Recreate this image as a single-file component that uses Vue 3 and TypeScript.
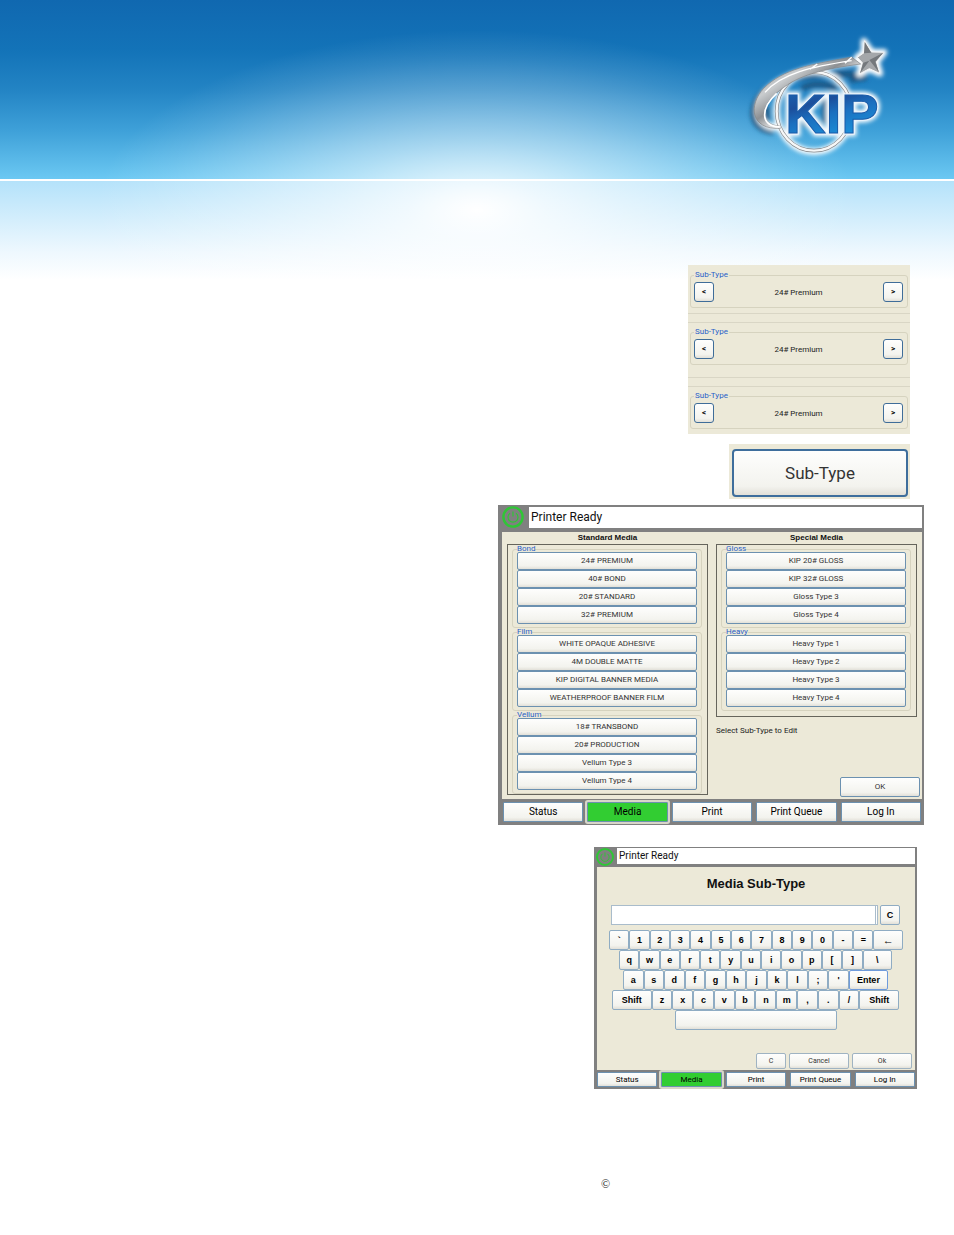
<script setup lang="ts">
import { ref } from 'vue'

interface MediaGroup {
  name: string
  items: string[]
}

interface Key {
  label: string
  size: number
}

const subTypes = ['24# Premium', '24# Premium', '24# Premium']

const standardMedia: MediaGroup[] = [
  { name: 'Bond', items: ['24# PREMIUM', '40# BOND', '20# STANDARD', '32# PREMIUM'] },
  {
    name: 'Film',
    items: ['WHITE OPAQUE ADHESIVE', '4M DOUBLE MATTE', 'KIP DIGITAL BANNER MEDIA', 'WEATHERPROOF BANNER FILM'],
  },
  { name: 'Vellum', items: ['18# TRANSBOND', '20# PRODUCTION', 'Vellum Type 3', 'Vellum Type 4'] },
]

const specialMedia: MediaGroup[] = [
  { name: 'Gloss', items: ['KIP 20# GLOSS', 'KIP 32# GLOSS', 'Gloss Type 3', 'Gloss Type 4'] },
  { name: 'Heavy', items: ['Heavy Type 1', 'Heavy Type 2', 'Heavy Type 3', 'Heavy Type 4'] },
]

const tabs = ['Status', 'Media', 'Print', 'Print Queue', 'Log In']
const activeTab = ref('Media')
const entry = ref('')

const singles = (chars: string): Key[] => chars.split('').map((label) => ({ label, size: 2 }))

const rows: Key[][] = [
  [...singles('`1234567890-='), { label: '←', size: 3 }],
  [...singles('qwertyuiop[]'), { label: '\\', size: 3 }],
  [...singles("asdfghjkl;'"), { label: 'Enter', size: 4 }],
  [{ label: 'Shift', size: 4 }, ...singles('zxcvbnm,./'), { label: 'Shift', size: 4 }],
]

function press(label: string) {
  if (label === '←') entry.value = entry.value.slice(0, -1)
  else if (label.length === 1) entry.value += label
}
</script>

<template>
  <div class="page">
    <header class="banner">
      <svg class="logo" viewBox="0 0 540 450" role="img" aria-label="KIP">
        <defs>
          <linearGradient id="chrome" x1="0" y1="0" x2="1" y2="1">
            <stop offset="0" stop-color="#8f9499" />
            <stop offset="0.3" stop-color="#c9ccce" />
            <stop offset="0.45" stop-color="#8d9093" />
            <stop offset="0.6" stop-color="#f4f5f6" />
            <stop offset="1" stop-color="#8b8e91" />
          </linearGradient>
          <linearGradient id="blue" x1="0" y1="0" x2="0.4" y2="1">
            <stop offset="0" stop-color="#1b6dbb" />
            <stop offset="0.4" stop-color="#1c4f9c" />
            <stop offset="0.6" stop-color="#1b6fbf" />
            <stop offset="1" stop-color="#1b94dc" />
          </linearGradient>
          <filter id="soft" x="-20%" y="-20%" width="140%" height="140%">
            <feGaussianBlur stdDeviation="7" />
          </filter>
        </defs>
        <g filter="url(#soft)">
          <g fill="none" stroke="#1d4a70" stroke-opacity="0.75" stroke-width="18">
            <path d="M130 335C55 330 50 250 115 205C160 172 270 155 400 165" />
            <path d="M215 205Q260 180 320 205M360 180l50 -8M225 250v70M285 240v70M110 260v45" />
          </g>
          <g fill="none" stroke="#fff" stroke-width="20" stroke-linejoin="round">
            <ellipse cx="252" cy="274" rx="112" ry="121" />
            <path d="M145 322C75 325 70 255 115 210C165 160 260 135 395 125" />
            <path d="M402 64L424 96L462 97L439 125L449 160L418 146L388 162L397 128L382 112L402 98Z" fill="#fff" />
          </g>
          <text class="mark glow" x="166" y="338">KIP</text>
        </g>
        <ellipse cx="252" cy="274" rx="112" ry="118" fill="none" stroke="#85898d" stroke-width="11" />
        <ellipse cx="252" cy="274" rx="112" ry="118" fill="none" stroke="#f6f7f7" stroke-width="7" />
        <path
          d="M151 325C60 330 55 255 101 205C160 146 240 134 365 111L392 132C280 147 205 165 151 210C85 258 90 315 149 318Z"
          fill="url(#chrome)"
          stroke="#7e8285"
          stroke-width="2"
        />
        <path d="M151 321C86 318 94 262 140 220" fill="none" stroke="#fff" stroke-width="5" />
        <path d="M105 217C155 160 245 140 365 122M240 148L262 132M345 130L365 112" fill="none" stroke="#fff" stroke-width="4" />
        <path
          d="M404 62L424 96L462 97L439 125L449 160L418 146L388 162L397 128L382 112L402 98Z"
          fill="#a4a7aa"
          stroke="#f4f4f4"
          stroke-width="3"
        />
        <path d="M404 66L424 98L402 100ZM460 98L418 120L447 157L436 125ZM390 160L418 122L400 128Z" fill="#74787c" />
        <text class="mark rim" x="166" y="338">KIP</text>
        <text class="mark face" x="166" y="338" fill="url(#blue)">KIP</text>
      </svg>
    </header>

    <main class="panels">
      <section class="selectors" aria-label="Sub-type selectors">
        <div v-for="(value, i) in subTypes" :key="i" class="selector">
          <fieldset class="group">
            <legend>Sub-Type</legend>
            <div class="stepper">
              <button type="button" aria-label="Previous sub-type">&lt;</button>
              <output>{{ value }}</output>
              <button type="button" aria-label="Next sub-type">&gt;</button>
            </div>
          </fieldset>
        </div>
      </section>

      <section class="edit">
        <button type="button">Sub-Type</button>
      </section>

      <section class="screen" aria-label="Media selection">
        <div class="status">
          <svg class="power" viewBox="0 0 24 24" aria-hidden="true">
            <circle cx="12" cy="12" r="9.6" />
            <path class="thin" d="M9 8.2a5 5 0 1 0 6 0M12 6.5v5" />
          </svg>
          <h2>Printer Ready</h2>
        </div>
        <div class="media">
          <div class="column">
            <h3>Standard Media</h3>
            <div class="box">
              <fieldset v-for="group in standardMedia" :key="group.name" class="group">
                <legend>{{ group.name }}</legend>
                <button v-for="item in group.items" :key="item" type="button">{{ item }}</button>
              </fieldset>
            </div>
          </div>
          <div class="column special">
            <h3>Special Media</h3>
            <div class="box">
              <fieldset v-for="group in specialMedia" :key="group.name" class="group">
                <legend>{{ group.name }}</legend>
                <button v-for="item in group.items" :key="item" type="button">{{ item }}</button>
              </fieldset>
            </div>
            <p>Select Sub-Type to Edit</p>
            <button type="button" class="ok">OK</button>
          </div>
        </div>
        <nav class="tabs">
          <button
            v-for="tab in tabs"
            :key="tab"
            type="button"
            :class="{ active: tab === activeTab }"
            @click="activeTab = tab"
          >
            {{ tab }}
          </button>
        </nav>
      </section>

      <section class="screen compact" aria-label="Media sub-type entry">
        <div class="status">
          <svg class="power" viewBox="0 0 24 24" aria-hidden="true">
            <circle cx="12" cy="12" r="9.6" />
            <path class="thin" d="M9 8.2a5 5 0 1 0 6 0M12 6.5v5" />
          </svg>
          <h2>Printer Ready</h2>
        </div>
        <div class="editor">
          <h3 id="entry-title">Media Sub-Type</h3>
          <div class="entry">
            <div class="field">
              <input v-model="entry" type="text" aria-labelledby="entry-title" />
            </div>
            <button type="button" class="key" @click="entry = ''">C</button>
          </div>
          <div class="keyboard">
            <div v-for="(row, r) in rows" :key="r" class="row">
              <button
                v-for="(key, k) in row"
                :key="k"
                type="button"
                class="key"
                :class="{
                  wide: key.size === 3,
                  long: key.size === 4,
                  enter: key.label === 'Enter',
                  back: key.label === '←',
                }"
                @click="press(key.label)"
              >
                {{ key.label }}
              </button>
            </div>
            <div class="row">
              <button type="button" class="key" aria-label="Space" @click="entry += ' '"></button>
            </div>
          </div>
          <div class="actions">
            <button type="button" class="clear" @click="entry = ''">C</button>
            <button type="button">Cancel</button>
            <button type="button">Ok</button>
          </div>
        </div>
        <nav class="tabs">
          <button
            v-for="tab in tabs"
            :key="tab"
            type="button"
            :class="{ active: tab === activeTab }"
            @click="activeTab = tab"
          >
            {{ tab }}
          </button>
        </nav>
      </section>
    </main>

    <footer class="legal">©</footer>
  </div>
</template>

<style>
body {
  margin: 0;
  background: #fff;
}
</style>

<style scoped>
.page,
.page * {
  box-sizing: border-box;
}

.page {
  min-height: 100vh;
  color: #222;
  font-family: Roboto, 'Liberation Sans', Arial, sans-serif;
  background:
    linear-gradient(#fff, #fff) 0 179px / 100% 2px no-repeat,
    radial-gradient(ellipse 40% 180px at 50% 210px, #fff 0, rgba(255, 255, 255, 0.72) 18%, rgba(255, 255, 255, 0.5) 38%, rgba(255, 255, 255, 0.3) 60%, rgba(255, 255, 255, 0.1) 84%, rgba(255, 255, 255, 0) 100%) 0 0 / 100% 280px no-repeat,
    linear-gradient(#1068b0 0, #1373b8 50px, #2384c4 90px, #3ea0d8 130px, #6cc9f3 180px, #b4e2fa 181px, #d4eefc 220px, #eef8fe 252px, #fff 280px) 0 0 / 100% 280px no-repeat,
    #fff;
}

h2,
h3,
p {
  margin: 0;
}

button {
  min-width: 0;
  margin: 0;
  padding: 0;
  overflow: hidden;
  border: 1px solid #6c91b0;
  border-radius: 2px;
  background: linear-gradient(#fefefd, #f3f3ee 80%, #e2e0d8);
  color: #333;
  font-family: Roboto, 'Liberation Sans', Arial, sans-serif;
  font-size: 8px;
  line-height: 12px;
  white-space: nowrap;
}

.banner {
  display: flex;
  justify-content: flex-end;
  height: 265px;
  padding: 20px 44px 0 0;
}

.logo {
  width: 180px;
  height: 150px;
}

.mark {
  font-family: 'Liberation Sans', Arial, sans-serif;
  font-size: 168px;
  font-weight: bold;
}

.glow {
  fill: #fff;
  stroke: #fff;
  stroke-width: 20px;
}

.rim {
  fill: none;
  stroke: #e8f2fa;
  stroke-width: 10px;
}

.face {
  stroke: #1a5ba8;
  stroke-width: 3px;
}

.panels {
  display: flex;
  flex-direction: column;
  align-items: flex-end;
  padding: 0 30px;
}

.group {
  min-width: 0;
  margin: 0;
  border: 1px solid #d6d3bf;
  border-radius: 3px;
}

.group legend {
  padding: 0 1px;
  color: #2a5fc8;
}

/* Stacked sub-type selectors */
.selectors {
  display: flex;
  flex-direction: column;
  gap: 8px;
  width: 222px;
  max-width: 100%;
  margin-right: 14px;
  background: #ece9d8;
}

.selector {
  padding: 3px 2px 5px;
  border: solid #d9d6c5;
  border-width: 1px 0;
}

.selector:first-child {
  border-top-color: transparent;
}

.selector:nth-child(2) {
  padding-bottom: 12px;
}

.selector:last-child {
  border-bottom: 0;
}

.selector .group {
  padding: 1px 4px 5px 3px;
}

.selector legend {
  font-size: 8px;
  line-height: 12px;
}

.stepper {
  display: flex;
  align-items: center;
  justify-content: space-between;
}

.stepper button {
  width: 20px;
  height: 20px;
  border-color: #3f6d99;
  border-radius: 3px;
  color: #000;
  font-weight: bold;
}

.stepper output {
  font-size: 8px;
}

/* Single large button */
.edit {
  width: 181px;
  max-width: 100%;
  margin: 10px 14px 6px 0;
  padding: 5px 2px 2px 3px;
  background: #ece9d8;
}

.edit button {
  display: block;
  width: 100%;
  height: 48px;
  border: 2px solid #3e6e9c;
  border-radius: 4px;
  font-size: 17px;
  line-height: 20px;
}

/* Touch-screen frame */
.screen {
  width: 426px;
  max-width: 100%;
  padding: 2px 2px 0 4px;
  background: #808080;
}

.status {
  display: flex;
  align-items: flex-start;
  height: 25px;
}

.power {
  flex: none;
  width: 24px;
  height: 24px;
  margin: -2px 4px 0 -1px;
  fill: none;
  stroke: #2fc636;
  stroke-width: 2.4;
}

.power .thin {
  stroke-width: 1.2;
}

.status h2 {
  flex: 1;
  padding-left: 2px;
  background: #fff;
  color: #111;
  font-size: 12px;
  font-weight: normal;
  line-height: 21px;
}

.media {
  display: flex;
  gap: 8px;
  padding: 0 2px 2px 5px;
  background: #ece9d8;
}

.column {
  display: flex;
  flex: 1;
  flex-direction: column;
  min-width: 0;
  padding-bottom: 2px;
}

.column h3 {
  color: #111;
  font-family: 'Liberation Sans', Arial, sans-serif;
  font-size: 8px;
  line-height: 12px;
  text-align: center;
}

.box {
  display: flex;
  flex-direction: column;
  gap: 1px;
  padding: 1px 5px 0 4px;
  border: 1px solid #66655c;
}

.box .group {
  display: flex;
  flex-direction: column;
  padding: 0 4px 3px;
}

.box legend {
  padding: 0;
  font-size: 8px;
  line-height: 6px;
}

.box button {
  height: 18px;
}

.special {
  flex-basis: 3px;
  padding-bottom: 0;
}

.special h3,
.special .box {
  margin-right: 3px;
}

.special .box {
  padding-bottom: 5px;
}

.special p {
  padding-top: 8px;
  font-size: 8px;
  line-height: 12px;
}

.ok {
  align-self: flex-end;
  width: 80px;
  height: 20px;
  margin-top: auto;
}

.tabs {
  display: flex;
  gap: 4px;
  padding: 3px 1px 3px 1px;
}

.tabs button {
  flex: 1;
  height: 20px;
  border-radius: 1px;
  color: #000;
  font-size: 10px;
}

.tabs .active {
  background: #32cd32;
  box-shadow: 0 0 0 2px #d8d6c8;
}

/* On-screen keyboard */
.compact {
  width: 323px;
  margin: 22px 7px 0 0;
  padding: 1px 2px 0 3px;
}

.compact .status {
  height: 19px;
}

.compact .status h2 {
  font-size: 10px;
  line-height: 16px;
}

.compact .power {
  width: 20px;
  height: 20px;
  margin: -1px 2px 0 -2px;
}

.editor {
  display: flex;
  flex-direction: column;
  padding-bottom: 1px;
  background: #ece9d8;
}

.editor h3 {
  padding-bottom: 4px;
  color: #111;
  font-family: 'Liberation Sans', Arial, sans-serif;
  font-size: 13px;
  line-height: 34px;
  text-align: center;
}

.entry {
  display: flex;
  gap: 2px;
  padding: 0 15px 5px 14px;
}

.field {
  flex: 1;
  height: 20px;
  padding-right: 1px;
  border: 1px solid #a9bccb;
  background: #fff;
}

.field input {
  display: block;
  width: 100%;
  height: 18px;
  padding: 0 4px;
  border: 0;
  border-right: 1px solid #a9bccb;
  outline: 0;
  background: transparent;
  font-size: 11px;
}

.key {
  flex: 2;
  height: 20px;
  border-color: #8facc3;
  color: #000;
  font-family: 'Liberation Sans', Arial, sans-serif;
  font-size: 9px;
  font-weight: bold;
}

.entry .key {
  flex: none;
  width: 20px;
}

.keyboard {
  display: flex;
  flex-direction: column;
  padding: 0 12px;
}

.row {
  display: flex;
}

.row:nth-child(2) {
  padding: 0 11px 0 10px;
}

.row:nth-child(3) {
  padding: 0 15px 0 14px;
}

.row:nth-child(4) {
  padding: 0 4px 0 3px;
}

.row:nth-child(5) {
  padding: 0 66px;
}

.wide {
  flex-grow: 3;
}

.long {
  flex-grow: 4;
}

.back {
  font-size: 11px;
}

.enter {
  border-color: #6f9bdc;
}

.actions {
  display: flex;
  justify-content: flex-end;
  gap: 3px;
  padding: 23px 3px 0 0;
}

.actions button {
  width: 60px;
  height: 16px;
  border-color: #9fb3c2;
  font-size: 7px;
  line-height: 10px;
}

.actions .clear {
  width: 30px;
}

.compact .tabs {
  padding: 2px 0;
}

.compact .tabs button {
  height: 15px;
  font-size: 8px;
  line-height: 10px;
}

.legal {
  padding: 88px 0 20px 63%;
  font-family: 'Liberation Serif', 'Times New Roman', serif;
  font-size: 12px;
  line-height: 14px;
}
</style>
